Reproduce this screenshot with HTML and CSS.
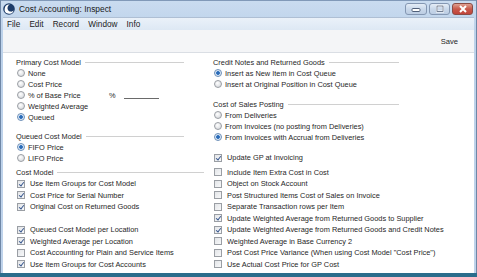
FILE: index.html
```html
<!DOCTYPE html>
<html lang="en">
<head>
    <meta charset="UTF-8">
    <title>Cost Accounting: Inspect</title>
    <link rel="stylesheet" href="styles.css">
</head>
<body>
    <div class="window">
        <div class="titlebar">
            <svg class="app-icon" width="12" height="12" viewBox="0 0 12 12">
                <circle cx="6" cy="6" r="5.8" fill="#1d3c69"/>
                <path d="M7 1.6 A4.6 4.6 0 1 0 10.6 7.6 A3.6 3.6 0 1 1 7 1.6 Z" fill="#ffffff"/>
            </svg>
            <span class="title">Cost Accounting: Inspect</span>
            <div class="caption-buttons">
                <span class="cbtn"><svg width="10" height="6" viewBox="0 0 10 6"><rect x="1" y="2.5" width="8" height="3" rx="1" fill="#fff" stroke="#50607a"/></svg></span>
                <span class="cbtn"><svg width="10" height="8" viewBox="0 0 10 8"><rect x="2" y="1" width="6" height="5.5" fill="none" stroke="#fff" stroke-width="2"/><rect x="2" y="1" width="6" height="5.5" fill="none" stroke="#50607a" stroke-width="0.8"/></svg></span>
                <span class="cbtn close"><svg width="10" height="8" viewBox="0 0 10 8"><path d="M2 1 L8 7 M8 1 L2 7" stroke="#fff" stroke-width="2"/></svg></span>
            </div>
        </div>

        <div class="client">
            <div class="menubar">
                <span>File</span>
                <span>Edit</span>
                <span>Record</span>
                <span>Window</span>
                <span>Info</span>
            </div>

            <div class="toolbar">
                <span class="save">Save</span>
            </div>

            <div class="content">
                <div class="upper">
                    <div class="col">
                        <div class="heading short">Primary Cost Model</div>
                        <div class="row"><span class="radio"></span>None</div>
                        <div class="row"><span class="radio"></span>Cost Price</div>
                        <div class="row"><span class="radio"></span><span class="pct-label">% of Base Price</span>%<span class="field"></span></div>
                        <div class="row"><span class="radio"></span>Weighted Average</div>
                        <div class="row"><span class="radio on"></span>Queued</div>

                        <div class="heading short gap-a">Queued Cost Model</div>
                        <div class="row"><span class="radio on"></span>FIFO Price</div>
                        <div class="row"><span class="radio"></span>LIFO Price</div>
                    </div>

                    <div class="col">
                        <div class="heading wide">Credit Notes and Returned Goods</div>
                        <div class="row"><span class="radio on"></span>Insert as New Item in Cost Queue</div>
                        <div class="row"><span class="radio"></span>Insert at Original Position in Cost Queue</div>

                        <div class="heading wide gap-b">Cost of Sales Posting</div>
                        <div class="row"><span class="radio"></span>From Deliveries</div>
                        <div class="row"><span class="radio"></span>From Invoices (no posting from Deliveries)</div>
                        <div class="row"><span class="radio on"></span>From Invoices with Accrual from Deliveries</div>

                        <div class="row gap-c"><span class="check on"></span>Update GP at Invoicing</div>
                    </div>
                </div>

                <div class="lower">
                    <div class="col">
                        <div class="heading medium">Cost Model</div>
                        <div class="row"><span class="check on"></span>Use Item Groups for Cost Model</div>
                        <div class="row"><span class="check on"></span>Cost Price for Serial Number</div>
                        <div class="row"><span class="check on"></span>Original Cost on Returned Goods</div>
                        <div class="row"></div>
                        <div class="row"><span class="check on"></span>Queued Cost Model per Location</div>
                        <div class="row"><span class="check on"></span>Weighted Average per Location</div>
                        <div class="row"><span class="check"></span>Cost Accounting for Plain and Service Items</div>
                        <div class="row"><span class="check on"></span>Use Item Groups for Cost Accounts</div>
                    </div>

                    <div class="col">
                        <div class="row"><span class="check"></span>Include Item Extra Cost in Cost</div>
                        <div class="row"><span class="check"></span>Object on Stock Account</div>
                        <div class="row"><span class="check"></span>Post Structured Items Cost of Sales on Invoice</div>
                        <div class="row"><span class="check"></span>Separate Transaction rows per Item</div>
                        <div class="row"><span class="check on"></span>Update Weighted Average from Returned Goods to Supplier</div>
                        <div class="row"><span class="check on"></span>Update Weighted Average from Returned Goods and Credit Notes</div>
                        <div class="row"><span class="check"></span>Weighted Average in Base Currency 2</div>
                        <div class="row"><span class="check"></span>Post Cost Price Variance (When using Cost Model "Cost Price")</div>
                        <div class="row"><span class="check"></span>Use Actual Cost Price for GP Cost</div>
                    </div>
                </div>
            </div>
        </div>
    </div>
</body>
</html>
```

FILE: styles.css
```css
body {
    margin: 0;
    font-family: "Liberation Sans", Arial, sans-serif;
    color: #262626;
    background-color: #2b6d8c;
}
.window {
    width: 477px;
    height: 273px;
    display: flex;
    flex-direction: column;
    background: linear-gradient(#cadcf0, #bdd2ea 30px, #bfd3eb);
    border-left: 1px solid #6f87a6;
    border-right: 1px solid #6f87a6;
    box-sizing: border-box;
}

/* title bar */
.titlebar {
    height: 17px;
    display: flex;
    align-items: center;
    padding: 0 3px 0 2px;
    border-top: 1px solid #8199b8;
    box-sizing: border-box;
}
.app-icon {
    margin-right: 4px;
}
.title {
    font-size: 8.4px;
    color: #1a1a1a;
}
.caption-buttons {
    margin-left: auto;
    display: flex;
    gap: 2px;
    align-self: flex-start;
    margin-top: 2px;
}
.cbtn {
    width: 21px;
    height: 12px;
    box-sizing: border-box;
    border: 1px solid #8497b2;
    border-radius: 3px;
    background: linear-gradient(#e4edf7, #c9d8ea 50%, #bccde3);
    display: flex;
    align-items: center;
    justify-content: center;
}
.cbtn:first-child {
    width: 22px;
}
.cbtn.close {
    border-color: #8a4b45;
    background: linear-gradient(#e0a191, #c8584a 50%, #c0443a);
}

/* client area */
.client {
    flex: 1;
    margin: 0 2px;
    display: flex;
    flex-direction: column;
    background-color: #ffffff;
}
.menubar {
    height: 13px;
    display: flex;
    align-items: center;
    font-size: 8.2px;
    color: #1b1b1b;
    background: linear-gradient(#eaf1f9, #dde8f4);
    border-top: 1px solid #aebfd4;
    box-sizing: border-box;
}
.menubar span {
    padding: 0 4.6px;
}
.menubar span:first-child {
    padding-left: 4px;
}
.toolbar {
    height: 23px;
    display: flex;
    align-items: center;
    justify-content: flex-end;
    background-color: #f4f5f7;
    border-bottom: 1px solid #dadee4;
    box-sizing: border-box;
}
.save {
    font-size: 7.6px;
    margin-right: 16px;
    margin-top: 1px;
}

/* form */
.content {
    flex: 1;
    padding: 3.5px 0 0 13px;
    font-size: 7.4px;
}
.upper, .lower {
    display: grid;
    grid-template-columns: 197px 1fr;
}
.lower {
    margin-top: 2.75px;
}
.col {
    display: flex;
    flex-direction: column;
}
.upper .row, .upper .heading {
    height: 11px;
}
.lower .row, .lower .heading {
    height: 11.5px;
}
.row {
    display: flex;
    align-items: center;
    white-space: nowrap;
}
.heading {
    display: flex;
    align-items: center;
    white-space: nowrap;
}
.heading::after {
    content: "";
    flex: 1;
    height: 1px;
    margin-left: 4px;
    background-color: #d0d0d0;
}
.heading.short {
    width: 168px;
}
.heading.medium {
    width: 188px;
}
.heading.wide {
    width: 186px;
}
.gap-a {
    margin-top: 8px;
}
.gap-b {
    margin-top: 9px;
}
.gap-c {
    margin-top: 9.5px;
}

.radio {
    width: 8px;
    height: 8px;
    margin: 0 3px 0 1px;
    border: 1px solid #9a9ea4;
    border-radius: 50%;
    box-sizing: border-box;
    background: radial-gradient(circle at 40% 35%, #ffffff, #e2e4e7 60%, #cfd2d6);
    flex-shrink: 0;
}
.radio.on {
    border-color: #6c8fb8;
    background: radial-gradient(circle, #1f5da8 0, #3b7ac4 1.6px, #d9e6f4 2.2px, #eef3f9);
}
.check {
    width: 8px;
    height: 8px;
    margin: 0 5px 0 1px;
    border: 1px solid #9a9ea4;
    box-sizing: border-box;
    background: linear-gradient(135deg, #e3e5e8, #f7f8f9);
    position: relative;
    flex-shrink: 0;
}
.check.on::after {
    content: "";
    position: absolute;
    left: 2px;
    top: 0;
    width: 1.5px;
    height: 4px;
    border-right: 1px solid #34548c;
    border-bottom: 1px solid #34548c;
    transform: rotate(38deg);
}
.pct-label {
    width: 81px;
}
.field {
    width: 35px;
    height: 8px;
    margin-left: 8px;
    border-bottom: 1px solid #6a6a6a;
    box-sizing: border-box;
}
```
